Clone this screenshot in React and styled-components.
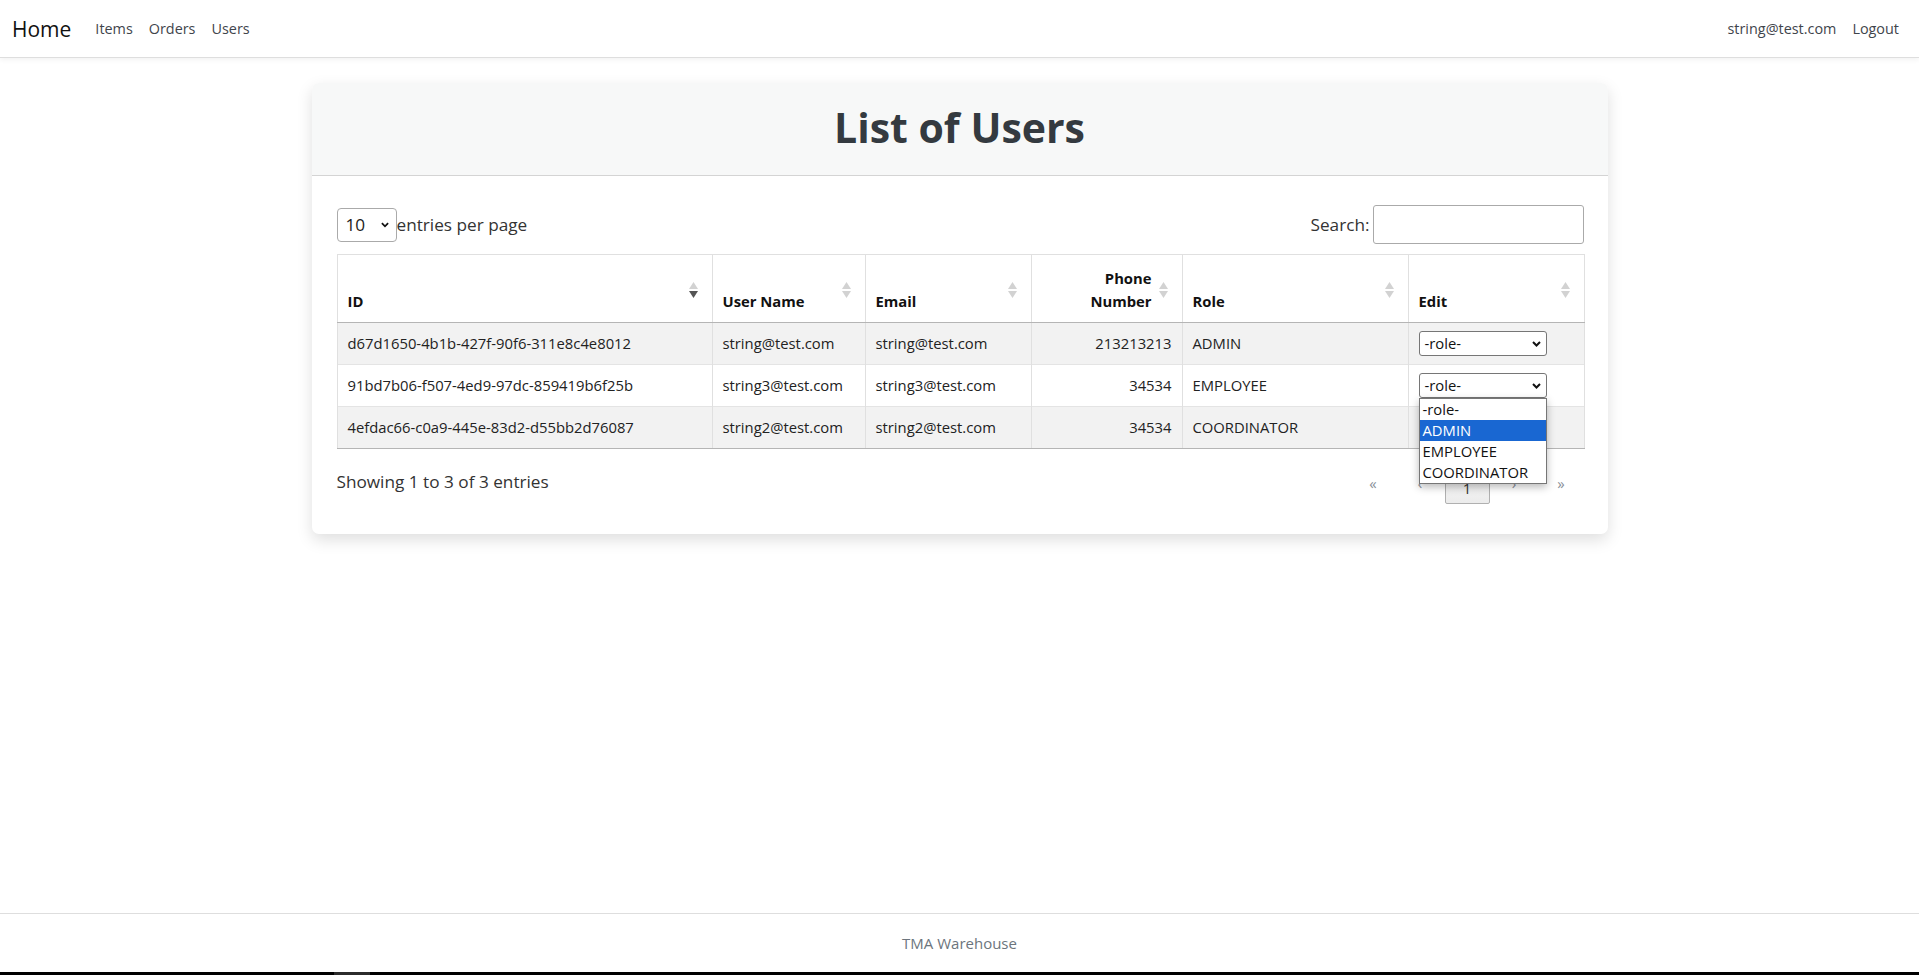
import React from "react";
import styled, { createGlobalStyle } from "styled-components";

const GlobalStyle = createGlobalStyle`
  html, body {
    margin: 0;
    padding: 0;
    background: #fff;
  }
  body {
    font-family: "Segoe UI", "Open Sans", "Liberation Sans", sans-serif;
    color: #212529;
  }
  * {
    box-sizing: border-box;
  }
`;

const Page = styled.div`
  min-height: 100vh;
  display: flex;
  flex-direction: column;
`;

// 상단 네비게이션
const NavBar = styled.nav`
  height: 58px;
  flex-shrink: 0;
  display: flex;
  align-items: center;
  justify-content: space-between;
  padding: 0 12px;
  background: #fff;
  border-bottom: 1px solid #dedede;
  box-shadow: 0 2px 5px rgba(0, 0, 0, 0.05);
`;

const NavGroup = styled.div`
  display: flex;
  align-items: center;
`;

const Brand = styled.a`
  font-size: 21px;
  color: #111;
  margin-right: 16px;
  text-decoration: none;
`;

const NavLink = styled.a`
  padding: 0 8px;
  font-size: 14.4px;
  color: #3f454c;
  text-decoration: none;
`;

const Main = styled.main`
  flex: 1;
  width: 100%;
  max-width: 1320px;
  margin: 0 auto;
  padding: 25px 12px;
`;

const Card = styled.section`
  background: #fff;
  border-radius: 7px;
  box-shadow: 0 6px 16px rgba(0, 0, 0, 0.13);
`;

const CardHeader = styled.header`
  background: #f7f8f8;
  border-bottom: 1px solid #d4d4d4;
  border-radius: 7px 7px 0 0;
  padding: 18px 20px 22px;
`;

const Title = styled.h1`
  margin: 0;
  text-align: center;
  font-size: 41px;
  line-height: 52px;
  font-weight: 700;
  color: #343a40;
`;

const CardBody = styled.div`
  padding: 29px 24px 30px 25px;
`;

const Controls = styled.div`
  display: flex;
  align-items: center;
  justify-content: space-between;
  height: 39px;
  margin-bottom: 10px;
  font-size: 17.2px;
  color: #333;
`;

const Length = styled.label`
  display: flex;
  align-items: center;
`;

const LengthSelect = styled.div`
  width: 60px;
  height: 34px;
  display: flex;
  align-items: center;
  justify-content: space-between;
  padding: 0 7px 0 8px;
  border: 1px solid #aaa;
  border-radius: 4px;
  color: #222;
`;

const SearchBox = styled.label`
  display: flex;
  align-items: center;
`;

const SearchInput = styled.div`
  width: 211px;
  height: 39px;
  margin-left: 3px;
  border: 1px solid #aaa;
  border-radius: 3px;
  background: #fff;
`;

const Table = styled.table`
  width: 100%;
  table-layout: fixed;
  border-collapse: collapse;
  font-size: 14.8px;
`;

const Th = styled.th`
  padding: 10px 14px 10px 10px;
  vertical-align: bottom;
  text-align: ${(p) => (p.$right ? "right" : "left")};
  font-weight: 700;
  line-height: 22.5px;
  color: #111;
  border: 1px solid #e0e0e0;
  border-bottom: 1px solid #b5b5b5;
`;

const HeadInner = styled.div`
  height: 47px;
  display: flex;
  align-items: flex-end;
`;

const HeadLabel = styled.span`
  flex: 1;
`;

const SortIcon = styled.svg`
  flex-shrink: 0;
  align-self: center;
  margin-left: 7px;
  margin-top: 2px;
`;

const Tr = styled.tr`
  background: ${(p) => (p.$striped ? "#f2f2f2" : "#fff")};
  &:last-child td {
    border-bottom: 1px solid #b5b5b5;
  }
`;

const Td = styled.td`
  padding: 8px 10px;
  line-height: 25px;
  text-align: ${(p) => (p.$right ? "right" : "left")};
  color: #222;
  border-left: 1px solid #e0e0e0;
  border-right: 1px solid #e0e0e0;
  border-top: 1px solid #e4e4e4;
  white-space: nowrap;
`;

const SelectWrap = styled.div`
  position: relative;
  width: 128px;
`;

const RoleSelect = styled.div`
  height: 25px;
  display: flex;
  align-items: center;
  justify-content: space-between;
  padding: 0 5px 0 5px;
  border: 1px solid #767676;
  border-radius: 3px;
  background: #fff;
  color: #111;
  line-height: 1;
`;

const OptionList = styled.ul`
  position: absolute;
  top: 100%;
  left: 0;
  width: 128px;
  margin: 0;
  padding: 0;
  list-style: none;
  background: #fff;
  border: 1px solid #767676;
  box-shadow: 0 3px 8px rgba(0, 0, 0, 0.28);
  z-index: 10;
`;

const Option = styled.li`
  height: 21px;
  line-height: 21px;
  padding-left: 3px;
  font-size: 14.8px;
  color: ${(p) => (p.$active ? "#fff" : "#111")};
  background: ${(p) => (p.$active ? "#1967d2" : "transparent")};
`;

const InfoRow = styled.div`
  display: flex;
  justify-content: space-between;
  align-items: flex-start;
  margin-top: 20px;
`;

const Info = styled.div`
  font-size: 17.2px;
  line-height: 26px;
  color: #333;
`;

const Pager = styled.div`
  display: flex;
  align-items: flex-start;
  margin-top: 2px;
`;

const PageButton = styled.span`
  width: 45px;
  height: ${(p) => (p.$current ? "33px" : "24px")};
  margin-left: 2px;
  display: flex;
  align-items: center;
  justify-content: center;
  font-size: 15px;
  color: ${(p) => (p.$current ? "#333" : "#8a9099")};
  border: 1px solid ${(p) => (p.$current ? "#b0b0b0" : "transparent")};
  border-radius: 2px;
  background: ${(p) =>
    p.$current ? "linear-gradient(to bottom, #f7f7f7 0%, #ececec 100%)" : "none"};
`;

const Footer = styled.footer`
  height: 59px;
  flex-shrink: 0;
  display: flex;
  align-items: center;
  justify-content: center;
  border-top: 1px solid #dedede;
  font-size: 15px;
  color: #6c757d;
`;

const BottomStrip = styled.div`
  height: 3px;
  flex-shrink: 0;
  background: #000;
  display: flex;
  padding-left: 334px;
`;

const StripMark = styled.span`
  width: 36px;
  background: #2b2b2b;
`;

const Chevron = ({ size = 9 }) => (
  <svg width={size} height="6" viewBox="0 0 9 6">
    <polyline points="1,1 4.5,4.5 8,1" fill="none" stroke="#111" strokeWidth="2" />
  </svg>
);

const Sort = ({ active }) => (
  <SortIcon width="9" height="16" viewBox="0 0 9 16">
    <path d="M4.5 0 L9 7 H0 Z" fill="#d2d2d2" />
    <path d="M0 9 H9 L4.5 16 Z" fill={active ? "#555" : "#d2d2d2"} />
  </SortIcon>
);

const columns = [
  { key: "id", label: "ID", width: 375, active: true },
  { key: "userName", label: "User Name", width: 153 },
  { key: "email", label: "Email", width: 166 },
  { key: "phone", label: ["Phone", "Number"], width: 151, right: true },
  { key: "role", label: "Role", width: 226 },
  { key: "edit", label: "Edit", width: 176 },
];

const users = [
  {
    id: "d67d1650-4b1b-427f-90f6-311e8c4e8012",
    userName: "string@test.com",
    email: "string@test.com",
    phone: "213213213",
    role: "ADMIN",
  },
  {
    id: "91bd7b06-f507-4ed9-97dc-859419b6f25b",
    userName: "string3@test.com",
    email: "string3@test.com",
    phone: "34534",
    role: "EMPLOYEE",
    open: true,
  },
  {
    id: "4efdac66-c0a9-445e-83d2-d55bb2d76087",
    userName: "string2@test.com",
    email: "string2@test.com",
    phone: "34534",
    role: "COORDINATOR",
  },
];

const roles = ["-role-", "ADMIN", "EMPLOYEE", "COORDINATOR"];

const App = () => {
  return (
    <>
      <GlobalStyle />
      <Page>
        <NavBar>
          <NavGroup>
            <Brand>Home</Brand>
            <NavLink>Items</NavLink>
            <NavLink>Orders</NavLink>
            <NavLink>Users</NavLink>
          </NavGroup>
          <NavGroup>
            <NavLink>string@test.com</NavLink>
            <NavLink>Logout</NavLink>
          </NavGroup>
        </NavBar>

        <Main>
          <Card>
            <CardHeader>
              <Title>List of Users</Title>
            </CardHeader>
            <CardBody>
              <Controls>
                <Length>
                  <LengthSelect>
                    <span>10</span>
                    <Chevron size={8} />
                  </LengthSelect>
                  entries per page
                </Length>
                <SearchBox>
                  Search:
                  <SearchInput />
                </SearchBox>
              </Controls>

              <Table>
                <colgroup>
                  {columns.map((c) => (
                    <col key={c.key} style={{ width: c.width }} />
                  ))}
                </colgroup>
                <thead>
                  <tr>
                    {columns.map((c) => (
                      <Th key={c.key} $right={c.right}>
                        <HeadInner>
                          <HeadLabel>
                            {Array.isArray(c.label) ? (
                              <>
                                {c.label[0]}
                                <br />
                                {c.label[1]}
                              </>
                            ) : (
                              c.label
                            )}
                          </HeadLabel>
                          <Sort active={c.active} />
                        </HeadInner>
                      </Th>
                    ))}
                  </tr>
                </thead>
                <tbody>
                  {users.map((u, i) => (
                    <Tr key={u.id} $striped={i % 2 === 0}>
                      <Td>{u.id}</Td>
                      <Td>{u.userName}</Td>
                      <Td>{u.email}</Td>
                      <Td $right>{u.phone}</Td>
                      <Td>{u.role}</Td>
                      <Td>
                        <SelectWrap>
                          <RoleSelect>
                            <span>-role-</span>
                            <Chevron />
                          </RoleSelect>
                          {u.open && (
                            <OptionList>
                              {roles.map((r) => (
                                <Option key={r} $active={r === "ADMIN"}>
                                  {r}
                                </Option>
                              ))}
                            </OptionList>
                          )}
                        </SelectWrap>
                      </Td>
                    </Tr>
                  ))}
                </tbody>
              </Table>

              <InfoRow>
                <Info>Showing 1 to 3 of 3 entries</Info>
                <Pager>
                  <PageButton>«</PageButton>
                  <PageButton>‹</PageButton>
                  <PageButton $current>1</PageButton>
                  <PageButton>›</PageButton>
                  <PageButton>»</PageButton>
                </Pager>
              </InfoRow>
            </CardBody>
          </Card>
        </Main>

        <Footer>TMA Warehouse</Footer>
        <BottomStrip>
          <StripMark />
        </BottomStrip>
      </Page>
    </>
  );
};

export default App;
